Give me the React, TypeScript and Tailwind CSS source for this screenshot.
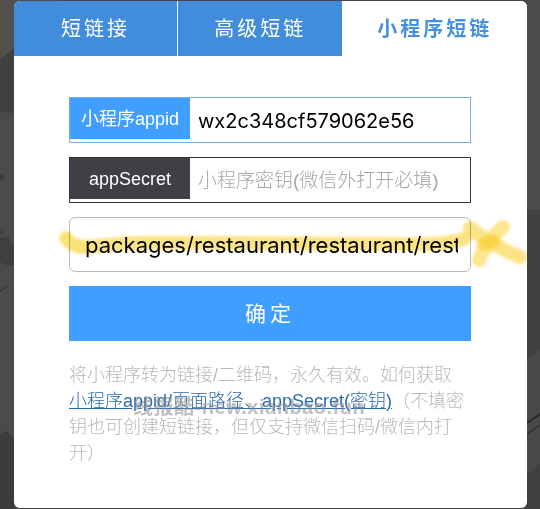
import { useState } from 'react';
import clsx from 'clsx';

const tabs = [
  { id: 'short', label: '短链接' },
  { id: 'advanced', label: '高级短链' },
  { id: 'miniapp', label: '小程序短链' },
];

function Backdrop() {
  return (
    <svg className="absolute inset-0 w-full h-full" viewBox="0 0 540 509" preserveAspectRatio="none" aria-hidden="true">
      <rect width="540" height="509" fill="#464646" />
      <path d="M0 0H60L14 48L0 60Z" fill="#524f4e" />
      <path d="M0 60L14 48V112H0Z" fill="#404041" />
      <path d="M0 112Q8 112 14 117V438L6 431L0 434Z" fill="#4b4b4b" />
      <path d="M0 238Q9 234 14 246V266Q6 266 0 262Z" fill="#3f3f3f" />
      <circle cx="1" cy="177" r="3" fill="#3e3e3e" />
      <circle cx="1" cy="231" r="3" fill="#404040" />
      <path d="M0 290L9 284L6 288L0 292Z" fill="#3a3a3a" />
      <path d="M0 434L6 431L14 438V509H0Z" fill="#3c3c3c" />
      <path d="M527 0H540V210H527Z" fill="#4c4c4c" />
      <path d="M527 210H540V360H527Z" fill="#414141" />
      <path d="M527 360L540 350V470L527 475Z" fill="#494949" />
      <path d="M527 423L540 414" stroke="#1d1d1d" strokeWidth="1.5" />
      <path d="M527 434L540 425" stroke="#333" strokeWidth="1.5" />
      <path d="M527 475L540 463V509H527Z" fill="#3f3f3f" />
    </svg>
  );
}

function MarkerStroke() {
  return (
    <svg
      className="absolute -left-2 top-0 w-[470px] h-14 overflow-visible pointer-events-none mix-blend-multiply"
      viewBox="0 0 470 56"
      fill="none"
      strokeLinecap="round"
      strokeLinejoin="round"
      aria-hidden="true"
    >
      <defs>
        <filter id="soft" x="-5%" y="-30%" width="110%" height="160%">
          <feGaussianBlur stdDeviation="1.5" />
        </filter>
      </defs>
      <g filter="url(#soft)" stroke="#fbdb5e">
        <path d="M5 21Q12 31 26 30Q60 25 130 26L330 27Q380 29 403 22" strokeWidth="14" opacity=".75" />
        <path d="M6 22Q13 31 27 30" strokeWidth="13" opacity=".4" />
        <path d="M409 11Q430 28 459 40" strokeWidth="14" opacity=".75" />
        <path d="M442 10Q425 25 418 43" strokeWidth="14" opacity=".7" />
        <path d="M422 27L433 24" stroke="#fbcb20" strokeWidth="13" opacity=".5" />
      </g>
    </svg>
  );
}

export default function App() {
  const [active, setActive] = useState('miniapp');
  const [appId, setAppId] = useState('wx2c348cf579062e56');
  const [secret, setSecret] = useState('');
  const [path, setPath] = useState('packages/restaurant/restaurant/restaurant');

  return (
    <div className="relative isolate min-h-screen pt-px pb-px pl-3.5 pr-[13px] font-['Liberation_Sans','Noto_Sans_CJK_SC',sans-serif]">
      <Backdrop />
      <main className="relative min-h-[calc(100vh-2px)] rounded-md bg-white overflow-hidden">
        <nav className="flex h-[55px]">
          {tabs.map((tab) => (
            <button
              key={tab.id}
              type="button"
              onClick={() => setActive(tab.id)}
              className={clsx(
                'text-xl tracking-[3px]',
                active === tab.id
                  ? 'flex-1 bg-white text-[#4590dc] font-bold'
                  : 'w-[32%] bg-[#428ddb] text-white border-r border-white nth-2:border-r-0',
              )}
            >
              {tab.label}
            </button>
          ))}
        </nav>

        <form className="flex flex-col gap-3.5 pl-[55px] pr-14 pt-[41px]" onSubmit={(e) => e.preventDefault()}>
          <div className="flex h-[46px] border border-[#79aee2]">
            <label htmlFor="appid" className="w-[120px] h-[41px] shrink-0 flex items-center justify-center bg-[#409eff] text-white text-lg">
              小程序appid
            </label>
            <input
              id="appid"
              value={appId}
              onChange={(e) => setAppId(e.target.value)}
              className="flex-1 min-w-0 px-2 pt-0.5 text-xl text-black font-['Inter','Noto_Sans_CJK_SC',sans-serif] outline-none"
            />
          </div>

          <div className="flex h-[46px] border border-[#35353a]">
            <label htmlFor="secret" className="w-[120px] h-[41px] shrink-0 flex items-center justify-center bg-[#3f4045] text-white text-lg">
              appSecret
            </label>
            <input
              id="secret"
              value={secret}
              onChange={(e) => setSecret(e.target.value)}
              placeholder="小程序密钥(微信外打开必填)"
              className="flex-1 min-w-0 px-2 pt-0.5 text-[19px] font-light placeholder:text-[#a3a5ab] outline-none"
            />
          </div>

          <div className="relative">
            <input
              aria-label="页面路径"
              value={path}
              onChange={(e) => setPath(e.target.value)}
              className="block w-full h-[55px] pl-[15px] pr-3 rounded-md border border-[#b9b9be] text-[22px] text-black font-['Inter','Noto_Sans_CJK_SC',sans-serif] outline-none"
            />
            <MarkerStroke />
          </div>

          <button type="submit" className="h-[55px] bg-[#409eff] text-white text-[21px] tracking-[4px]">
            确定
          </button>
        </form>

        <div className="relative ml-[55px] mr-[50px] mt-[21px] text-lg leading-[26px] font-light text-[#b8b8b8]">
          <p>
            将小程序转为链接/二维码，永久有效。如何获取
            <br />
            <a href="#help" className="text-[#2a6cb3] underline">
              小程序appid/页面路径、appSecret(密钥)
            </a>
            （不填密
            <br />
            钥也可创建短链接，但仅支持微信扫码/微信内打
            <br />
            开）
          </p>
          <span className="absolute left-16 top-8 whitespace-nowrap text-xl leading-[26px] tracking-wide font-bold text-[#8c8c8c]/55">
            线报酷-new.xianbao.fun
          </span>
        </div>
      </main>
    </div>
  );
}
